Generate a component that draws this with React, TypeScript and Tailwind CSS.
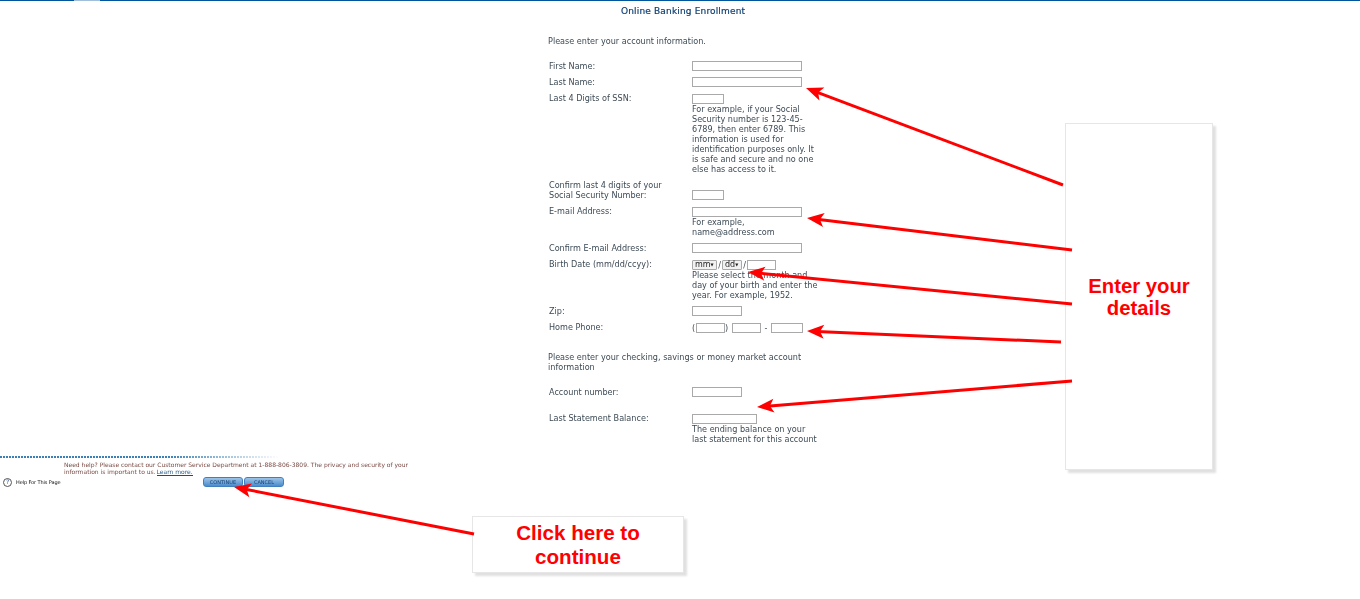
const Field = ({ w, cls = "" }: { w: string; cls?: string }) => (
  <input type="text" readOnly className={`block h-[10px] box-border border border-[#a9a9a9] bg-white ${w} ${cls}`} />
);

const Row = ({ label, mt, up = false, children }: { label: React.ReactNode; mt: string; up?: boolean; children: React.ReactNode }) => (
  <div className={`flex ${mt}`}>
    <div className={`w-[144px] shrink-0 pl-px ${up ? "-mt-px" : ""}`}>{label}</div>
    <div className="w-[126px]">{children}</div>
  </div>
);

const Select = ({ text, w }: { text: string; w: string }) => (
  <span className={`flex h-[10px] items-center justify-between rounded-[1px] border border-[#a9a9a9] bg-[#f2f2f2] pl-[2px] pr-[3px] text-[8px] leading-none text-[#222] ${w}`}>
    {text}
    <span className="text-[4px]">▼</span>
  </span>
);

const Arrow = ({ x1, y1, x2, y2 }: { x1: number; y1: number; x2: number; y2: number }) => {
  const a = Math.atan2(y1 - y2, x1 - x2);
  const c = Math.cos(a);
  const s = Math.sin(a);
  const L = 17;
  const H = 7;
  const bx = x2 + c * L;
  const by = y2 + s * L;
  return (
    <g>
      <line x1={x1} y1={y1} x2={x2 + c * 10} y2={y2 + s * 10} stroke="#ff0000" strokeWidth="3" />
      <polygon
        points={`${x2},${y2} ${bx - s * H},${by + c * H} ${x2 + c * 13},${y2 + s * 13} ${bx + s * H},${by - c * H}`}
        fill="#ff0000"
      />
    </g>
  );
};

const Callout = ({ cls, children }: { cls: string; children: React.ReactNode }) => (
  <div className={`absolute flex items-center justify-center border border-[#e6e6e6] bg-white text-center font-['Liberation_Sans',Arial,sans-serif] font-bold text-[#ff0000] shadow-[3px_3px_2px_#e0e0e0] ${cls}`}>
    {children}
  </div>
);

export default function App() {
  return (
    <div className="relative h-[599px] w-[1360px] overflow-hidden bg-white font-['DejaVu_Sans','Liberation_Sans',sans-serif] text-[8.1px] leading-[10px] text-[#3d4a55]">
      <div className="relative h-px bg-[#00569c]">
        <div className="absolute left-[74px] top-0 h-px w-[26px] bg-[#9fc0dc]" />
      </div>

      <div className="ml-[548px] w-[280px] blur-[0.2px]">
        <h1 className="ml-[73px] mt-[5px] h-[10px] whitespace-nowrap text-[9px] font-normal leading-[10px] tracking-[0.16px] text-[#0f3f73] [-webkit-text-stroke:0.2px_#0f3f73]">
          Online Banking Enrollment
        </h1>
        <p className="mt-[20px]">Please enter your account information.</p>

        <Row label="First Name:" mt="mt-[15px]">
          <Field w="w-[110px]" />
        </Row>
        <Row label="Last Name:" mt="mt-[6px]">
          <Field w="w-[110px]" />
        </Row>
        <Row label="Last 4 Digits of SSN:" mt="mt-[7px]" up>
          <Field w="w-[32px]" />
          <div>
            For example, if your Social Security number is 123-45-6789, then enter 6789. This information is used for identification purposes only. It is safe and secure and no one else has access to it.
          </div>
        </Row>
        <div className="mt-[6px] flex">
          <div className="w-[144px] shrink-0 pl-px">
            Confirm last 4 digits of your
            <br />
            Social Security Number:
          </div>
          <div className="pt-[10px]">
            <Field w="w-[32px]" />
          </div>
        </div>
        <Row label="E-mail Address:" mt="mt-[7px]" up>
          <Field w="w-[110px]" />
          <div>
            For example,
            <br />
            name@address.com
          </div>
        </Row>
        <Row label="Confirm E-mail Address:" mt="mt-[6px]">
          <Field w="w-[110px]" />
        </Row>
        <Row label="Birth Date (mm/dd/ccyy):" mt="mt-[7px]" up>
          <div className="flex h-[10px] items-center">
            <Select text="mm" w="w-[25px]" />
            <span className="w-[5px] text-center">/</span>
            <Select text="dd" w="w-[20px]" />
            <span className="w-[5px] text-center">/</span>
            <Field w="w-[29px]" />
          </div>
          <div>Please select the month and day of your birth and enter the year. For example, 1952.</div>
        </Row>
        <Row label="Zip:" mt="mt-[6px]">
          <Field w="w-[50px]" />
        </Row>
        <Row label="Home Phone:" mt="mt-[7px]" up>
          <div className="flex h-[10px] items-center whitespace-nowrap">
            <span className="w-[4px]">(</span>
            <Field w="w-[29px]" />
            <span className="w-[7px]">)</span>
            <Field w="w-[29px]" />
            <span className="w-[10px] text-center">-</span>
            <Field w="w-[32px]" />
          </div>
        </Row>
        <p className="mt-[19px] w-[265px]">Please enter your checking, savings or money market account information</p>
        <Row label="Account number:" mt="mt-[15px]">
          <Field w="w-[50px]" />
        </Row>
        <Row label="Last Statement Balance:" mt="mt-[17px]" up>
          <Field w="w-[65px]" />
          <div>The ending balance on your last statement for this account</div>
        </Row>
      </div>

      <footer className="mt-[12px] w-[420px] blur-[0.3px]">
        <div className="h-[2px] w-[280px] bg-[repeating-linear-gradient(90deg,#3a7fb5_0_2px,transparent_2px_3px)] [mask-image:linear-gradient(90deg,#000_60%,transparent)]" />
        <div className="ml-[64px] mt-[3px] w-[352px] text-[6px] leading-[7px] text-[#7a4a44]">
          <p className="whitespace-nowrap">Need help? Please contact our Customer Service Department at 1-888-806-3809. The privacy and security of your</p>
          <p className="flex gap-[1px] whitespace-nowrap">
            <span>information is important to us.</span>
            <span className="border-b border-[#00569c] text-[#2b5f8a]">Learn more.</span>
          </p>
        </div>
        <div className="mt-[1px] flex items-center">
          <span className="ml-[3px] flex h-[9px] w-[9px] items-center justify-center rounded-full border border-[#555] text-[6px] leading-none text-[#2b4f8a]">?</span>
          <span className="ml-[4px] w-[187px] text-[5px] leading-[10px] tracking-[-0.1px] text-[#111]">Help For This Page</span>
          <div className="flex gap-px">
            <span className="flex h-[10px] w-[40px] items-center justify-center rounded-[3px] border border-[#3f7fc0] bg-gradient-to-b from-[#9cc4e8] to-[#4a8ccc] text-[5px] text-[#16406e]">CONTINUE</span>
            <span className="flex h-[10px] w-[40px] items-center justify-center rounded-[3px] border border-[#3f7fc0] bg-gradient-to-b from-[#9cc4e8] to-[#4a8ccc] text-[5px] text-[#16406e]">CANCEL</span>
          </div>
        </div>
      </footer>

      <Callout cls="left-[1065px] top-[123px] h-[347px] w-[148px] text-[20.3px] leading-[22px]">
        <span>
          Enter your
          <br />
          details
        </span>
      </Callout>
      <Callout cls="left-[472px] top-[516px] h-[57px] w-[212px] text-[20.6px] leading-[24px]">
        <span>
          Click here to
          <br />
          continue
        </span>
      </Callout>

      <svg className="pointer-events-none absolute left-0 top-0" width="1360" height="599" viewBox="0 0 1360 599">
        <Arrow x1={1063} y1={185} x2={806} y2={88} />
        <Arrow x1={1072} y1={250} x2={807} y2={218} />
        <Arrow x1={1072} y1={304} x2={748} y2={272} />
        <Arrow x1={1061} y1={342} x2={807} y2={331} />
        <Arrow x1={1072} y1={381} x2={757} y2={407} />
        <Arrow x1={474} y1={534} x2={234} y2={487} />
      </svg>
    </div>
  );
}
